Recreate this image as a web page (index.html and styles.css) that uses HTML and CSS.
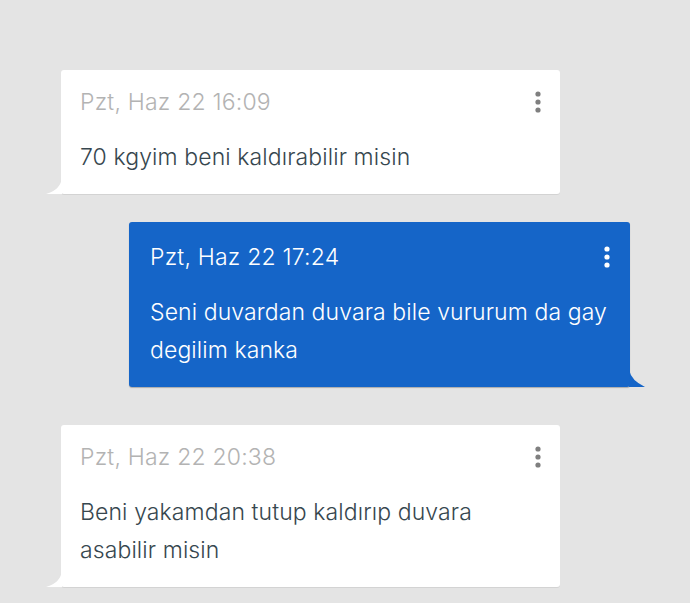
FILE: index.html
```html
<!DOCTYPE html>
<html lang="tr">
<head>
    <meta charset="UTF-8">
    <meta name="viewport" content="width=device-width, initial-scale=1.0">
    <title>Mesajlar</title>
    <link rel="stylesheet" href="styles.css">
</head>
<body>
    <div class="thread">
        <div class="bubble incoming">
            <div class="bubble-head">
                <span class="time">Pzt, Haz 22 16:09</span>
                <svg class="more" width="6" height="22" viewBox="0 0 6 22"><circle cx="3" cy="3" r="2.6"/><circle cx="3" cy="11" r="2.6"/><circle cx="3" cy="19" r="2.6"/></svg>
            </div>
            <p class="text">70 kgyim beni kaldırabilir misin</p>
        </div>

        <div class="bubble outgoing">
            <div class="bubble-head">
                <span class="time">Pzt, Haz 22 17:24</span>
                <svg class="more" width="6" height="22" viewBox="0 0 6 22"><circle cx="3" cy="3" r="2.6"/><circle cx="3" cy="11" r="2.6"/><circle cx="3" cy="19" r="2.6"/></svg>
            </div>
            <p class="text">Seni duvardan duvara bile vururum da gay degilim kanka</p>
        </div>

        <div class="bubble incoming">
            <div class="bubble-head">
                <span class="time">Pzt, Haz 22 20:38</span>
                <svg class="more" width="6" height="22" viewBox="0 0 6 22"><circle cx="3" cy="3" r="2.6"/><circle cx="3" cy="11" r="2.6"/><circle cx="3" cy="19" r="2.6"/></svg>
            </div>
            <p class="text">Beni yakamdan tutup kaldırıp duvara asabilir misin</p>
        </div>
    </div>
</body>
</html>
```

FILE: styles.css
```css
* {
    margin: 0;
    padding: 0;
    box-sizing: border-box;
}

body {
    font-family: Inter, Roboto, sans-serif;
    background: #e4e4e4;
    min-height: 100vh;
}

.thread {
    display: flex;
    flex-direction: column;
    padding: 70px 0 0 61px;
}

.bubble {
    position: relative;
    width: 499px;
    padding: 18px 19px 18px 19px;
    border-radius: 3px;
    background: white;
    box-shadow: 0 1px 0 rgba(0, 0, 0, 0.07);
}

.bubble + .bubble {
    margin-top: 28px;
}

.bubble.outgoing + .bubble {
    margin-top: 38px;
}

.bubble-head {
    display: flex;
    justify-content: space-between;
    align-items: center;
    height: 28px;
    margin-bottom: 22px;
}

.time {
    font-size: 23px;
    font-weight: 300;
    letter-spacing: 0.2px;
    color: #b3b3b3;
}

.more {
    fill: #7f7f7f;
}

.text {
    font-size: 23px;
    font-weight: 300;
    letter-spacing: 0.1px;
    line-height: 38px;
    color: #37474f;
}

/* tails */
.bubble::before {
    content: "";
    position: absolute;
    bottom: 0;
    width: 16px;
    height: 16px;
    background: inherit;
}

.incoming::before {
    left: -15px;
    clip-path: path("M15.5 0 Q15.5 11 0 16 L16 16 Z");
}

.outgoing {
    margin-left: 68px;
    width: 501px;
    padding: 21px 20px 18px 21px;
    background: #1565c8;
    box-shadow: 0 1px 1px rgba(0, 0, 0, 0.25);
}

.outgoing::before {
    right: -15px;
    clip-path: path("M0.5 0 Q2 9 16 16 L0 16 Z");
}

.outgoing .time,
.outgoing .text {
    color: white;
}

.outgoing .more {
    fill: white;
}
```
